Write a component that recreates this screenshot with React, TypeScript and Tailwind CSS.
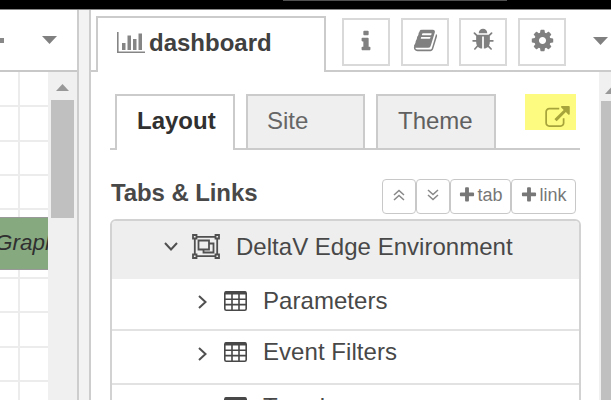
import React from "react";

const PATHS = {
  info: "M640 1344v128q0 26-19 45t-45 19h-512q-26 0-45-19t-19-45v-128q0-26 19-45t45-19h64v-384h-64q-26 0-45-19t-19-45v-128q0-26 19-45t45-19h384q26 0 45 19t19 45v576h64q26 0 45 19t19 45zm-128-1152v192q0 26-19 45t-45 19h-256q-26 0-45-19t-19-45v-192q0-26 19-45t45-19h256q26 0 45 19t19 45z",
  cog: "M1152 896q0-106-75-181t-181-75-181 75-75 181 75 181 181 75 181-75 75-181zm512-109v222q0 12-8 23t-20 13l-185 28q-19 54-39 91 35 50 107 138 10 12 10 25t-9 23q-27 37-99 108t-94 71q-12 0-26-9l-138-108q-44 23-91 38-16 136-29 186-7 28-36 28h-222q-14 0-24.5-8.5t-11.5-21.5l-28-184q-49-16-90-37l-141 107q-10 9-25 9-14 0-25-11-126-114-165-168-7-10-7-23 0-12 8-23 15-21 51-66.5t54-70.5q-27-50-41-99l-183-27q-13-2-21-12.5t-8-23.5v-222q0-12 8-23t19-13l186-28q14-46 39-92-40-57-107-138-10-12-10-24 0-10 9-23 26-36 98.5-107.5t94.5-71.5q13 0 26 10l138 107q44-23 91-38 16-136 29-186 7-28 36-28h222q14 0 24.5 8.5t11.5 21.5l28 184q49 16 90 37l142-107q9-9 24-9 13 0 25 10 129 119 165 170 7 8 7 22 0 12-8 23-15 21-51 66.5t-54 70.5q26 50 41 98l183 28q13 2 21 12.5t8 23.5z",
  book: "M1703 478q40 57 18 129l-275 906q-19 64-76.5 107.5t-122.5 43.5h-923q-77 0-148.5-53.5t-99.5-131.5q-24-67-2-127 0-4 3-27t4-37q1-8-3-21.5t-3-19.5q2-11 8-21t16.5-23.5 16.5-23.5q23-38 45-91.5t30-91.5q3-10 .5-30t-.5-28q3-11 17-28t17-23q21-36 42-92t25-90q1-9-2.5-32t.5-28q4-13 22-30.5t22-22.5q19-26 42.5-84.5t27.5-96.5q1-8-3-25.5t-2-26.5q2-8 9-18t18-23 17-21q8-12 16.5-30.5t15-35 16-36 19.5-32 26.5-23.5 36-11.5 47.5 5.5l-1 3q38-9 51-9h761q74 0 114 56t18 130l-274 906q-36 119-71.5 153.5t-128.5 34.5h-869q-27 0-38 15-11 16-1 43 24 70 144 70h923q29 0 56-15.5t35-41.5l300-987q7-22 5-57 38 15 59 43zm-1064 2q-4 13 2 22.5t20 9.5h608q13 0 25.5-9.5t16.5-22.5l21-64q4-13-2-22.5t-20-9.5h-608q-13 0-25.5 9.5t-16.5 22.5zm-83 256q-4 13 2 22.5t20 9.5h608q13 0 25.5-9.5t16.5-22.5l21-64q4-13-2-22.5t-20-9.5h-608q-13 0-25.5 9.5t-16.5 22.5z",
  bug: "M1696 960q0 26-19 45t-45 19h-224q0 171-67 290l208 209q19 19 19 45t-19 45q-18 19-45 19t-45-19l-198-197q-5 5-15 13t-42 28.5-65 36.5-82 29-97 13v-896h-128v896q-51 0-101.5-13.5t-87-33-66-39-43.5-32.5l-15-14-183 207q-20 21-48 21-24 0-43-16-19-18-20.5-44.5t15.5-46.5l202-227q-58-114-58-274h-224q-26 0-45-19t-19-45 19-45 45-19h224v-294l-173-173q-19-19-19-45t19-45 45-19 45 19l173 173h844l173-173q19-19 45-19t45 19 19 45-19 45l-173 173v294h224q26 0 45 19t19 45zm-480-576h-640q0-133 93.5-226.5t226.5-93.5 226.5 93.5 93.5 226.5z",
  external: "M1408 928v320q0 119-84.5 203.5t-203.5 84.5h-832q-119 0-203.5-84.5t-84.5-203.5v-832q0-119 84.5-203.5t203.5-84.5h704q14 0 23 9t9 23v64q0 14-9 23t-23 9h-704q-66 0-113 47t-47 113v832q0 66 47 113t113 47h832q66 0 113-47t47-113v-320q0-14 9-23t23-9h64q14 0 23 9t9 23zm384-864v512q0 26-19 45t-45 19-45-19l-176-176-652 652q-10 10-23 10t-23-10l-114-114q-10-10-10-23t10-23l652-652-176-176q-19-19-19-45t19-45 45-19h512q26 0 45 19t19 45z",
  plus: "M1600 736v192q0 40-28 68t-68 28h-416v416q0 40-28 68t-68 28h-192q-40 0-68-28t-28-68v-416h-416q-40 0-68-28t-28-68v-192q0-40 28-68t68-28h416v-416q0-40 28-68t68-28h192q40 0 68 28t28 68v416h416q40 0 68 28t28 68z",
};

function Glyph({ name, className, box = "0 0 1792 1792" }: { name: keyof typeof PATHS; className: string; box?: string }) {
  return (
    <svg viewBox={box} className={`shrink-0 fill-current ${className}`}>
      <path d={PATHS[name]} />
    </svg>
  );
}

function Caret({ className = "" }: { className?: string }) {
  return (
    <svg viewBox="0 0 15 8" className={`h-[8px] w-[15px] shrink-0 fill-[#808080] ${className}`}>
      <path d="M0 0H15L7.5 8Z" />
    </svg>
  );
}

function ChartIcon() {
  return (
    <svg viewBox="0 0 28 22" className="h-[22px] w-[28px] shrink-0 fill-[#858585]">
      <path d="M0 0H1.6V19.5H28V21H0ZM5 11H8.5V18H5ZM10.5 3.5H14V18H10.5ZM16 7H19.5V18H16ZM21.5 1.5H25V18H21.5Z" />
    </svg>
  );
}

function DoubleChevron({ down = false }: { down?: boolean }) {
  return (
    <svg viewBox="0 0 12 12" className="mb-[4px] h-3 w-3 fill-none stroke-[#888]" strokeWidth="1.5">
      <path d={down ? "M1 1L6 5.5L11 1M1 6L6 10.5L11 6" : "M1 6L6 1.5L11 6M1 11L6 6.5L11 11"} />
    </svg>
  );
}

function GroupIcon() {
  return (
    <svg viewBox="0 0 28 25" className="ml-[14px] h-[25px] w-[28px] shrink-0 fill-none stroke-[#505050]" strokeWidth="1.8">
      <path d="M4.5 2.8H23.5M4.5 22.2H23.5M2.8 4.5V20.5M25.2 4.5V20.5" />
      <path d="M1 1H4.5V4.5H1ZM23.5 1H27V4.5H23.5ZM1 20.5H4.5V24H1ZM23.5 20.5H27V24H23.5Z" />
      <path d="M6.5 6.5H17V15.5H6.5ZM17 9.5H21.5V18.5H11.5V15.5" />
    </svg>
  );
}

function TableIcon() {
  return (
    <svg viewBox="0 0 23 20" className="ml-[17px] h-[20px] w-[23px] shrink-0 fill-none stroke-[#484848]" strokeWidth="1.6">
      <rect x="0.8" y="0.8" width="21.4" height="18.4" rx="1.5" />
      <path d="M1 8.3H22M1 13.6H22M8 3V19M15 3V19" />
      <path d="M1 2H22" strokeWidth="3" />
    </svg>
  );
}

function ToolButton({ children, className }: { children: React.ReactNode; className: string }) {
  return (
    <button className={`flex h-[48px] w-[48px] shrink-0 items-center justify-center border-2 border-[#d9d9d9] bg-white pb-1 text-[#808080] ${className}`}>
      {children}
    </button>
  );
}

function SmallButton({ children, className }: { children: React.ReactNode; className: string }) {
  return (
    <button className={`flex h-[35px] shrink-0 items-center justify-center rounded-[4px] border-[1.5px] border-[#c8c8c8] bg-white text-[18px] leading-none text-[#777] ${className}`}>
      {children}
    </button>
  );
}

function PageRow({ label, className }: { label: string; className: string }) {
  return (
    <div className={`flex shrink-0 items-center border-b-2 border-[#e2e2e2] pl-[86px] ${className}`}>
      <svg viewBox="0 0 9 14" className="mt-[3px] h-[14px] w-[9px] shrink-0 fill-none stroke-[#505050]" strokeWidth="2">
        <path d="M1 1L7.5 7L1 13" />
      </svg>
      <TableIcon />
      <span className="ml-[16px] tracking-[0.05px]">{label}</span>
    </div>
  );
}

const GRID_ROWS = [34, 69, 103, 137, 172, 206, 240, 275, 309];

function Workspace() {
  return (
    <div className="flex w-[77px] shrink-0 flex-col">
      <div className="flex h-[62px] shrink-0 items-center border-b-2 border-[#c8c8c8]">
        <span className="h-[5px] w-[4px] bg-[#888]" />
        <Caret className="ml-[38px]" />
      </div>
      <div className="flex min-h-0 flex-1">
        <div className="relative w-[48px] overflow-hidden bg-white">
          <svg viewBox="0 0 48 328" className="h-[328px] w-[48px] stroke-[#ececec]" strokeWidth="2">
            <path d="M19 0V328" />
            {GRID_ROWS.map((y) => (
              <path key={y} d={`M0 ${y}H48`} />
            ))}
          </svg>
          <div className="absolute top-[145px] left-0 flex h-[53px] w-[60px] items-center border-y-[1.5px] border-[#999] bg-[#87a980] text-[22.5px] leading-none text-[#303030] italic">
            <span className="-ml-[5px]">Graph</span>
          </div>
        </div>
        <div className="flex w-[29px] flex-col items-center bg-[#f0f0f0] pt-[12px]">
          <svg viewBox="0 0 13 7" className="h-[7px] w-[13px] fill-[#999]">
            <path d="M0 7L6.5 0L13 7Z" />
          </svg>
          <div className="mt-[9px] mr-[1px] h-[118px] w-[23px] bg-[#c0c0c0]" />
        </div>
      </div>
    </div>
  );
}

function SidebarHeader() {
  return (
    <div className="flex h-[62px] shrink-0">
      <div className="w-[5px] border-b-2 border-[#cbcbcb]" />
      <div className="mt-[6px] flex w-[230px] shrink-0 items-center border-x-2 border-t-2 border-[#cbcbcb] pb-[5px] pl-[19px]">
        <ChartIcon />
        <span className="ml-[4px] text-[24px] leading-none font-bold text-[#404040]">dashboard</span>
      </div>
      <div className="flex flex-1 items-start border-b-2 border-[#cbcbcb] pt-[8px] pl-[16px]">
        <ToolButton className="">
          <Glyph name="info" box="0 0 640 1664" className="h-[23px] w-[10px]" />
        </ToolButton>
        <ToolButton className="ml-[11px]">
          <Glyph name="book" className="h-[25px] w-[25px]" />
        </ToolButton>
        <ToolButton className="ml-[10px]">
          <Glyph name="bug" className="h-[24px] w-[24px]" />
        </ToolButton>
        <ToolButton className="ml-[11px]">
          <Glyph name="cog" className="h-[25px] w-[25px]" />
        </ToolButton>
        <Caret className="mt-[19px] ml-[27px]" />
      </div>
    </div>
  );
}

function TabStrip() {
  return (
    <div className="flex h-[56px] w-[470px] shrink-0 text-[24px] leading-none">
      <div className="w-[5px] border-b-2 border-[#cbcbcb]" />
      <div className="flex w-[120px] items-center border-x-2 border-t-2 border-[#cbcbcb] pb-[4px] pl-[20px] font-bold text-[#303030]">Layout</div>
      <div className="w-[11px] border-b-2 border-[#cbcbcb]" />
      <div className="flex w-[119px] items-center border-2 border-[#cbcbcb] bg-[#efefef] pb-[2px] pl-[19px] text-[#666]">Site</div>
      <div className="w-[11px] border-b-2 border-[#cbcbcb]" />
      <div className="flex w-[120px] items-center border-2 border-[#cbcbcb] bg-[#efefef] pb-[2px] pl-[20px] text-[#606060]">Theme</div>
      <div className="flex flex-1 items-start border-b-2 border-[#cbcbcb] pl-[29px]">
        <div className="h-[36px] w-[51px] bg-[#fefc80] pt-[12px] pl-[20px] text-[#a8a43c]">
          <Glyph name="external" box="0 0 1792 1536" className="h-[21px] w-[25px]" />
        </div>
      </div>
    </div>
  );
}

export default function App() {
  return (
    <div className="flex h-[400px] w-[611px] flex-col overflow-hidden bg-white font-['Liberation_Sans',Arial,sans-serif]">
      <div className="h-[10px] shrink-0 border-b border-[#888] bg-black">
        <div className="ml-[283px] h-[1px] w-[224px] bg-[#505050]" />
      </div>
      <div className="flex min-h-0 flex-1">
        <Workspace />
        <div className="w-[14px] shrink-0 border-x-2 border-[#cdcdcd] bg-[#f3f3f3]" />
        <div className="flex min-w-0 flex-1 flex-col">
          <SidebarHeader />
          <div className="flex min-h-0 flex-1">
            <div className="flex w-[508px] shrink-0 flex-col pt-[22px] pl-[19px]">
              <TabStrip />
              <div className="mt-[29px] flex h-[35px] w-[466px] shrink-0 items-center">
                <h2 className="flex-1 pb-[8px] pl-[1px] text-[24px] leading-none font-bold tracking-[-0.1px] text-[#484848]">Tabs &amp; Links</h2>
                <SmallButton className="w-[34px]"><DoubleChevron /></SmallButton>
                <SmallButton className="w-[34px]"><DoubleChevron down /></SmallButton>
                <SmallButton className="w-[61px] gap-[1px] pb-[4px]">
                  <Glyph name="plus" className="h-[18px] w-[18px]" />tab
                </SmallButton>
                <SmallButton className="w-[65px] gap-[1px] pb-[4px]">
                  <Glyph name="plus" className="h-[18px] w-[18px]" />link
                </SmallButton>
              </div>
              <div className="mt-[5px] flex h-[220px] w-[471px] shrink-0 flex-col overflow-hidden rounded-t-[6px] border-2 border-[#d2d2d2] text-[24px] leading-none text-[#484848]">
                <div className="flex h-[58px] shrink-0 items-center bg-[#eee] pb-[7px] pl-[52px]">
                  <svg viewBox="0 0 14 9" className="h-[9px] w-[14px] shrink-0 fill-none stroke-[#505050]" strokeWidth="2">
                    <path d="M1 1L7 7.5L13 1" />
                  </svg>
                  <GroupIcon />
                  <span className="ml-[16px] tracking-[0.02px]">DeltaV Edge Environment</span>
                </div>
                <PageRow label="Parameters" className="h-[52px] pb-[7px]" />
                <PageRow label="Event Filters" className="h-[54px] pb-[10px]" />
                <PageRow label="Trends" className="h-[53px] pb-[7px]" />
              </div>
            </div>
            <div className="w-[12px] overflow-hidden bg-[#f0f0f0] pt-[15px] pl-[2px]">
              <svg viewBox="0 0 13 7" className="ml-[4px] h-[7px] w-[13px] fill-[#999]">
                <path d="M0 7L6.5 0L13 7Z" />
              </svg>
              <div className="mt-[7px] h-[300px] w-[23px] bg-[#c0c0c0]" />
            </div>
          </div>
        </div>
      </div>
    </div>
  );
}
